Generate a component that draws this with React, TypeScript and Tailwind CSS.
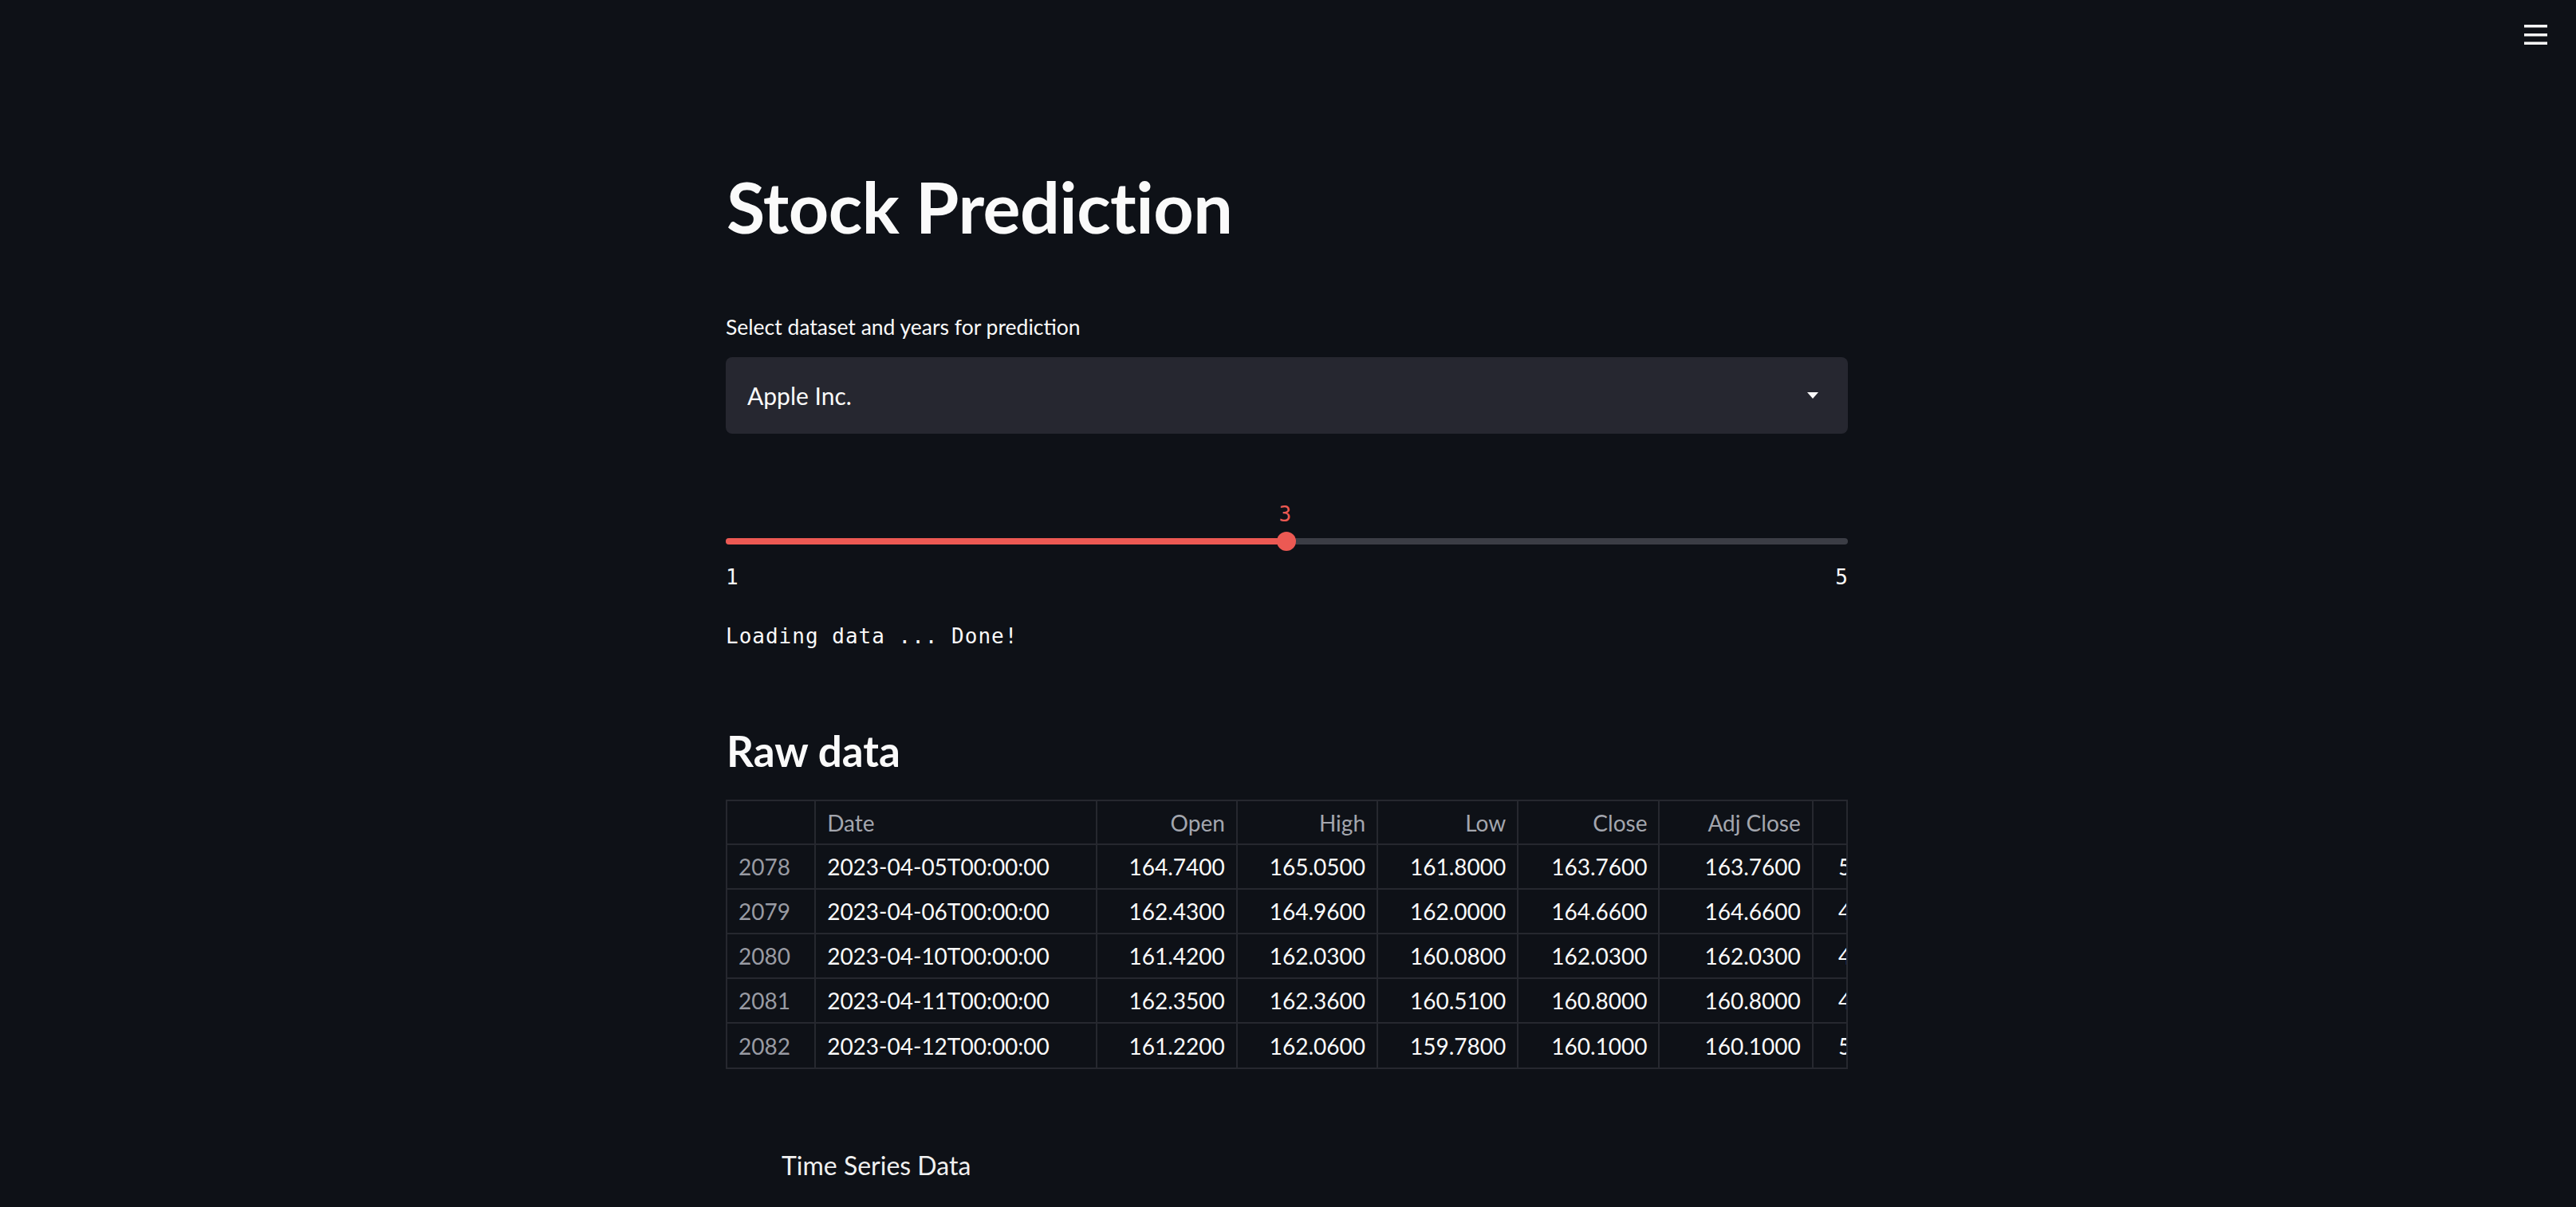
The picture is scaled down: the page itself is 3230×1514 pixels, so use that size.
import React from "react";

const rows = [
  ["2078", "2023-04-05T00:00:00", "164.7400", "165.0500", "161.8000", "163.7600", "163.7600", "51511700"],
  ["2079", "2023-04-06T00:00:00", "162.4300", "164.9600", "162.0000", "164.6600", "164.6600", "45390100"],
  ["2080", "2023-04-10T00:00:00", "161.4200", "162.0300", "160.0800", "162.0300", "162.0300", "47716900"],
  ["2081", "2023-04-11T00:00:00", "162.3500", "162.3600", "160.5100", "160.8000", "160.8000", "47644200"],
  ["2082", "2023-04-12T00:00:00", "161.2200", "162.0600", "159.7800", "160.1000", "160.1000", "50133100"],
];

const headers = ["", "Date", "Open", "High", "Low", "Close", "Adj Close", "Volume"];

export default function App() {
  return (
    <div className="min-h-screen w-full bg-[#0e1117] text-[#fafafa] font-['Lato','Noto_Sans',sans-serif]">
      <header className="h-[88px] flex items-center justify-end pr-[36px]">
        <svg width="29" height="26" viewBox="0 0 29 26" fill="#fafafa">
          <rect x="0" y="0" width="29" height="3.5" />
          <rect x="0" y="11" width="29" height="3.5" />
          <rect x="0" y="21.5" width="29" height="3.5" />
        </svg>
      </header>

      <main className="w-[1410px] pr-[3px] mx-auto flex flex-col">
        <h1 className="mt-[118px] h-[106px] text-[88px] leading-[106px] font-bold tracking-[-0.5px] pl-[1px]">
          Stock Prediction
        </h1>

        <label className="mt-[83px] h-[30px] text-[26.5px] leading-[30px]">
          Select dataset and years for prediction
        </label>

        <div className="mt-[23px] h-[96px] rounded-lg bg-[#262730] flex items-center justify-between pl-[27px] pr-[37px]">
          <span className="text-[30px] leading-[34px]">Apple Inc.</span>
          <svg width="14" height="8" viewBox="0 0 14 8">
            <polygon points="0,0 14,0 7,8" fill="#fafafa" />
          </svg>
        </div>

        <div className="mt-[86px] h-[30px] relative font-['DejaVu_Sans_Mono',monospace] text-[26px] leading-[30px] text-[#ec5953]">
          <span className="absolute left-[calc(50%-10px)] top-0">3</span>
        </div>

        <div className="mt-[7px] h-[24px] relative flex items-center">
          <div className="h-[8px] w-full rounded-full bg-[#3b3d45] flex">
            <div className="h-full w-1/2 rounded-l-full bg-[#ec5953]" />
          </div>
          <div className="absolute left-[calc(50%-13px)] top-0 w-[24px] h-[24px] rounded-full bg-[#ec5953]" />
        </div>

        <div className="mt-[18px] h-[30px] flex justify-between font-['DejaVu_Sans_Mono',monospace] text-[26px] leading-[30px]">
          <span>1</span>
          <span>5</span>
        </div>

        <div className="mt-[44px] h-[30px] font-['DejaVu_Sans_Mono',monospace] text-[26px] leading-[30px] tracking-[1px] whitespace-pre">
          Loading data ... Done!
        </div>

        <h3 className="mt-[97px] h-[64px] text-[53px] leading-[64px] font-bold pl-[1px]">Raw data</h3>

        <div className="mt-[29px] w-full overflow-hidden border-2 border-[#26282f]">
          <table className="table-fixed border-collapse w-[1537px] text-[28px]">
            <colgroup>
              <col className="w-[110px]" />
              <col className="w-[352px]" />
              <col className="w-[176px]" />
              <col className="w-[176px]" />
              <col className="w-[176px]" />
              <col className="w-[177px]" />
              <col className="w-[192px]" />
              <col className="w-[176px]" />
            </colgroup>
            <thead>
              <tr className="h-[54px]">
                {headers.map((h, i) => (
                  <th
                    key={i}
                    className={`font-normal text-[#a3a6ae] pl-[14px] pr-[14px] border-l-2 first:border-l-0 border-[#26282f] whitespace-nowrap ${
                      i <= 1 ? "text-left" : "text-right"
                    }`}
                  >
                    {h}
                  </th>
                ))}
              </tr>
            </thead>
            <tbody>
              {rows.map((r, ri) => (
                <tr key={ri} className="h-[56px] border-t-2 border-[#26282f]">
                  {r.map((c, ci) => (
                    <td
                      key={ci}
                      className={`pl-[14px] pr-[14px] border-l-2 first:border-l-0 border-[#26282f] whitespace-nowrap ${
                        ci === 0 ? "text-left text-[#999ba3]" : ci === 1 ? "text-left" : "text-right"
                      }`}
                    >
                      {c}
                    </td>
                  ))}
                </tr>
              ))}
            </tbody>
          </table>
        </div>

        <div className="mt-[101px] h-[40px] pl-[70px] text-[32px] leading-[40px] text-[#f0f0f0]">
          Time Series Data
        </div>
      </main>
    </div>
  );
}
